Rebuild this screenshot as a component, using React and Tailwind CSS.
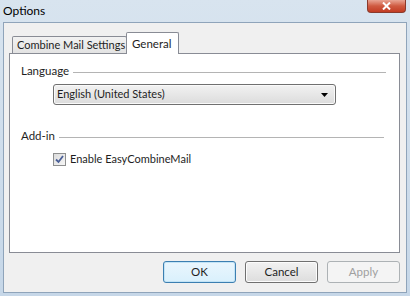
import React from "react";

const font = { fontFamily: 'Lato, "Noto Sans", sans-serif' };

function Group({ label, lineClass, children }) {
  return (
    <div>
      <div className="flex items-center">
        <span className="text-[11.5px] leading-[14px] text-[#1e1e1e]">{label}</span>
        <div className={"ml-[4px] h-px bg-[#b4b4b4] " + lineClass} />
      </div>
      {children}
    </div>
  );
}

function Button({ children, variant }) {
  const cls =
    variant === "default"
      ? "border-[#3c7fb1] bg-gradient-to-b from-[#eaf6fd] to-[#d9f0fc] text-[#1e1e1e] shadow-[inset_0_0_0_1px_#c3e4f6]"
      : variant === "disabled"
      ? "border-[#adb2b5] bg-[#f4f4f4] text-[#a0a0a0]"
      : "border-[#707070] bg-gradient-to-b from-[#f2f2f2] to-[#dddddd] text-[#1e1e1e] shadow-[inset_0_0_0_1px_#fcfcfc]";
  return (
    <button
      className={
        "flex h-[22px] w-[73px] items-center justify-center rounded-[3px] border text-[11.5px] " + cls
      }
    >
      {children}
    </button>
  );
}

export default function App() {
  return (
    <div
      className="flex h-[296px] w-[410px] flex-col bg-gradient-to-b from-[#d8e4ef] to-[#c6d7e8]"
      style={font}
    >
      {/* Title bar */}
      <div className="flex h-[22px] items-start justify-between">
        <span className="ml-[3px] mt-[3px] text-[12px] leading-[16px] text-black">Options</span>
        <div className="mr-[4px] flex h-[13px] w-[39px] items-center justify-center rounded-b-[4px] border border-t-0 border-[#8a3a2c] bg-gradient-to-b from-[#e8a493] via-[#cf5a41] to-[#c23b22]">
          <svg width="9" height="8" viewBox="0 0 9 8">
            <path d="M1 0.5l7 7M8 0.5l-7 7" stroke="#fff" strokeWidth="2" />
          </svg>
        </div>
      </div>

      {/* Client area */}
      <div className="mx-[3px] mb-[3px] flex flex-1 flex-col border border-[#8fa4ba] bg-[#f0f0f0]">
        {/* Tabs */}
        <div className="ml-[5px] mt-[9px] flex items-end whitespace-nowrap">
          <div className="ml-[3px] flex h-[17px] w-[115px] items-center rounded-t-[2px] border border-b-0 border-[#898c95] bg-gradient-to-b from-[#f2f2f2] to-[#e3e3e3] pl-[4px] text-[11px] text-[#1e1e1e]">
            Combine Mail Settings
          </div>
          <div className="relative z-10 -mb-px ml-[-1px] flex h-[22px] w-[53px] items-start rounded-t-[2px] border border-b-0 border-[#898c95] bg-white pl-[5px] pt-[2px] text-[11.5px] text-[#1e1e1e]">
            General
          </div>
        </div>

        {/* Panel */}
        <div className="ml-[5px] mr-[6px] h-[200px] border border-[#898c95] bg-white pl-[11px] pr-[13px] pt-[10px]">
          <Group label="Language" lineClass="flex-1 mt-[2px]">
            <div className="ml-[32px] mt-[6px] flex h-[21px] w-[283px] items-center justify-between rounded-[3px] border border-[#707070] bg-gradient-to-b from-[#f2f2f2] to-[#dcdcdc] pl-[3px] pr-[7px] text-[11px] text-[#1e1e1e] shadow-[inset_0_0_0_1px_#fafafa]">
              <span>English (United States)</span>
              <svg width="7" height="4" viewBox="0 0 7 4">
                <path d="M0 0h7L3.5 4z" fill="#000" />
              </svg>
            </div>
          </Group>
          <div className="mt-[24px]">
            <Group label="Add-in" lineClass="flex-1 mr-[2px] mt-[2px]">
              <div className="ml-[32px] mt-[8px] flex items-center">
                <div className="flex h-[13px] w-[13px] items-center justify-center border border-[#8e8f8f] bg-gradient-to-br from-[#dcdcdc] to-[#f6f6f6]">
                  <svg width="9" height="9" viewBox="0 0 9 9">
                    <path d="M1 4.5l2.5 2.5L8 1" fill="none" stroke="#4a5f97" strokeWidth="1.8" />
                  </svg>
                </div>
                <span className="ml-[4px] text-[11px] text-[#1e1e1e]">Enable EasyCombineMail</span>
              </div>
            </Group>
          </div>
        </div>

        {/* Buttons */}
        <div className="mr-[6px] mt-[8px] flex justify-end gap-[9px]">
          <Button variant="default">OK</Button>
          <Button>Cancel</Button>
          <Button variant="disabled">Apply</Button>
        </div>
      </div>
    </div>
  );
}
